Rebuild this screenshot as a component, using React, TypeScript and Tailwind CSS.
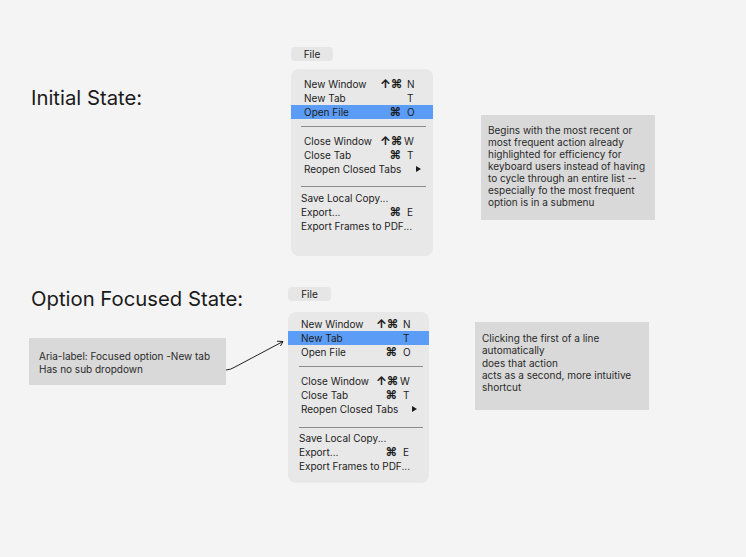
import React from "react";

type Row =
  | { kind: "item"; label: string; mods?: string; key2?: string; keyCls?: string; sub?: boolean; active?: boolean; pl: string }
  | { kind: "sep"; cls: string };

function Menu({ rows, cls }: { rows: Row[]; cls: string }) {
  return (
    <div className={"w-full rounded-[8px] bg-[#e8e8e8] " + cls}>
      {rows.map((r, i) =>
        r.kind === "sep" ? (
          <div key={i} className={"h-px bg-[#8c8c8c] " + r.cls} />
        ) : (
          <div
            key={i}
            className={
              "flex h-[14px] items-center text-[10px] leading-[14px] text-[#1c1c1c] " +
              (r.active ? "bg-[#5b9cf6] " : "") +
              r.pl
            }
          >
            <span className="min-w-0 flex-1 whitespace-nowrap">{r.label}</span>
            <span className="flex w-[53px] shrink-0 items-center">
              <span className="w-[21px] shrink-0 text-right text-[12px] font-bold leading-[14px]">{r.mods ?? ""}</span>
              {r.sub ? (
                <svg width="5" height="6" viewBox="0 0 5 6" className="ml-[15px]">
                  <path d="M0 0 L5 3 L0 6 Z" fill="#1c1c1c" />
                </svg>
              ) : (
                <span className={r.keyCls ?? "ml-[6px]"}>{r.key2 ?? ""}</span>
              )}
            </span>
          </div>
        )
      )}
    </div>
  );
}

const rowsA: Row[] = [
  { kind: "item", label: "New Window", mods: "↑⌘", key2: "N", pl: "pl-[13px]" },
  { kind: "item", label: "New Tab", key2: "T", pl: "pl-[13px]" },
  { kind: "item", label: "Open File", mods: "⌘", key2: "O", active: true, pl: "pl-[13px]" },
  { kind: "sep", cls: "ml-[10px] mr-[7px] mt-[7px] mb-[7px]" },
  { kind: "item", label: "Close Window", mods: "↑⌘", key2: "W", keyCls: "ml-[3px]", pl: "pl-[13px]" },
  { kind: "item", label: "Close Tab", mods: "⌘", key2: "T", pl: "pl-[13px]" },
  { kind: "item", label: "Reopen Closed Tabs", sub: true, pl: "pl-[13px]" },
  { kind: "sep", cls: "ml-[10px] mr-[7px] mt-[10px] mb-[4px]" },
  { kind: "item", label: "Save Local Copy...", pl: "pl-[10px]" },
  { kind: "item", label: "Export...", mods: "⌘", key2: "E", pl: "pl-[10px]" },
  { kind: "item", label: "Export Frames to PDF...", pl: "pl-[10px]" },
];

const rowsB: Row[] = [
  { kind: "item", label: "New Window", mods: "↑⌘", key2: "N", pl: "pl-[13px]" },
  { kind: "item", label: "New Tab", key2: "T", active: true, pl: "pl-[13px]" },
  { kind: "item", label: "Open File", mods: "⌘", key2: "O", pl: "pl-[13px]" },
  { kind: "sep", cls: "ml-[11px] mr-[6px] mt-[7px] mb-[7px]" },
  { kind: "item", label: "Close Window", mods: "↑⌘", key2: "W", keyCls: "ml-[3px]", pl: "pl-[13px]" },
  { kind: "item", label: "Close Tab", mods: "⌘", key2: "T", pl: "pl-[13px]" },
  { kind: "item", label: "Reopen Closed Tabs", sub: true, pl: "pl-[13px]" },
  { kind: "sep", cls: "ml-[11px] mr-[6px] mt-[11px] mb-[3px]" },
  { kind: "item", label: "Save Local Copy...", pl: "pl-[11px]" },
  { kind: "item", label: "Export...", mods: "⌘", key2: "E", pl: "pl-[11px]" },
  { kind: "item", label: "Export Frames to PDF...", pl: "pl-[11px]" },
];

export default function App() {
  return (
    <div
      className="relative h-[557px] w-[746px] overflow-hidden bg-[#f4f4f4] text-[#1a1a1a]"
      style={{ fontFamily: "Inter, 'Noto Sans', sans-serif" }}
    >
      {/* Section 1 */}
      <section className="flex pt-[47px]">
        <div className="w-[291px] shrink-0 pl-[31px] pt-[39px]">
          <h1 className="text-[20.3px] leading-[24px] font-normal">Initial State:</h1>
        </div>
        <div className="w-[142px] shrink-0">
          <div className="flex h-[14px] w-[42px] items-center justify-center rounded-[4px] bg-[#e6e6e6] text-[10px]">
            File
          </div>
          <Menu rows={rowsA} cls="mt-[8px] h-[187px] pt-[8px]" />
        </div>
        <div className="ml-[48px] mt-[68px] h-[105px] w-[174px] shrink-0 bg-[#d9d9d9] pl-[7px] pt-[9px] text-[10px] leading-[12px] text-[#2a2a2a]">
          <p>Begins with the most recent or</p>
          <p>most frequent action already</p>
          <p>highlighted for efficiency for</p>
          <p>keyboard users instead of having</p>
          <p>to cycle through an entire list --</p>
          <p>especially fo the most frequent</p>
          <p>option is in a submenu</p>
        </div>
      </section>

      {/* Section 2 */}
      <section className="mt-[31px] flex">
        <div className="w-[288px] shrink-0 pl-[29px]">
          <h1 className="pl-[2px] text-[20.3px] leading-[24px] font-normal">Option Focused State:</h1>
          <div className="mt-[27px] h-[47px] w-[197px] bg-[#d9d9d9] pl-[10px] pt-[12px] text-[10px] leading-[12.5px] text-[#2a2a2a]">
            <p>Aria-label: Focused option -New tab</p>
            <p>Has no sub dropdown</p>
          </div>
        </div>
        <div className="w-[141px] shrink-0">
          <div className="flex h-[14px] w-[43px] items-center justify-center rounded-[4px] bg-[#e6e6e6] text-[10px]">
            File
          </div>
          <Menu rows={rowsB} cls="mt-[11px] h-[171px] pt-[5px]" />
        </div>
        <div className="ml-[46px] mt-[35px] h-[88px] w-[174px] shrink-0 bg-[#d9d9d9] pl-[7px] pt-[10px] text-[10px] leading-[12.3px] text-[#2a2a2a]">
          <p>Clicking the first of a line</p>
          <p>automatically</p>
          <p>does that action</p>
          <p>acts as a second, more intuitive</p>
          <p>shortcut</p>
        </div>
      </section>

      {/* connector arrow */}
      <svg className="pointer-events-none absolute left-0 top-0" width="746" height="557">
        <path d="M226 370 Q231 369.5 234 367.5 L283 341.5" fill="none" stroke="#222" strokeWidth="1" />
        <path d="M277 341.2 L283 341.5 L280.5 346" fill="none" stroke="#222" strokeWidth="1" />
      </svg>
    </div>
  );
}
